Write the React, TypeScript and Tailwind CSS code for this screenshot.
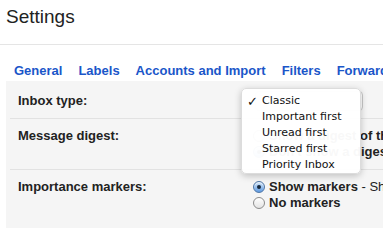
import React from "react";

const TABS = ["General", "Labels", "Accounts and Import", "Filters", "Forwarding and POP/IMAP"];
const INBOX_TYPES = ["Classic", "Important first", "Unread first", "Starred first", "Priority Inbox"];

function Radio({ checked }: { checked?: boolean }) {
  return checked ? (
    <span className="w-[12px] h-[12px] rounded-full border border-[#4f76a6] bg-gradient-to-b from-[#d6e8fa] to-[#5e9ae0] flex items-center justify-center shrink-0 shadow-[inset_0_1px_1px_rgba(255,255,255,0.7)]">
      <span className="w-[4px] h-[4px] rounded-full bg-[#17283b]" />
    </span>
  ) : (
    <span className="w-[12px] h-[12px] rounded-full border border-[#8c8c8c] bg-gradient-to-b from-[#ffffff] to-[#e4e4e4] shrink-0" />
  );
}

export default function App() {
  return (
    <div className="w-[383px] h-[228px] overflow-hidden bg-white font-['Liberation_Sans',Arial,sans-serif] text-[13px] text-[#222] flex flex-col">
      {/* header */}
      <div className="h-[45px] border-b border-[#e5e5e5] pl-[6px] pt-[6px] shrink-0">
        <h1 className="text-[19px] leading-[22px] text-[#222]">Settings</h1>
      </div>

      {/* tabs */}
      <div className="h-[36px] shrink-0 flex items-end pb-[2px] pl-[14px] gap-4 whitespace-nowrap">
        {TABS.map((t) => (
          <span key={t} className="font-bold text-[#1a56c9] leading-[16px]">{t}</span>
        ))}
      </div>

      {/* settings panel */}
      <div className="relative flex-1 ml-[6px] bg-[#f5f5f5] pl-[4px]">
        {/* inbox type */}
        <div className="h-[38px] border-b border-[#e2e2e2] flex pl-[8px] pt-[12px]">
          <div className="w-[235px] font-bold leading-[16px] shrink-0">Inbox type:</div>
          <div className="w-[108px] h-[20px] -mt-[2px] ml-[2px] rounded-[4px] border border-[#c8c8c8] bg-white shrink-0" />
        </div>

        {/* message digest */}
        <div className="h-[51px] border-b border-[#e2e2e2] flex pl-[8px] pt-[9px]">
          <div className="w-[235px] font-bold leading-[16px] shrink-0">Message digest:</div>
          <div className="flex flex-col whitespace-nowrap">
            <div className="flex items-center gap-[4px] h-[16px]">
              <Radio />
              <span className="font-bold">Show a digest of the messages</span>
            </div>
            <div className="flex items-center gap-[4px] h-[16px]">
              <Radio checked />
              <span className="font-bold">Don't show a digest</span>
            </div>
          </div>
        </div>

        {/* importance markers */}
        <div className="flex pl-[8px] pt-[9px]">
          <div className="w-[235px] font-bold leading-[16px] shrink-0">Importance markers:</div>
          <div className="flex flex-col whitespace-nowrap">
            <div className="flex items-center gap-[4px] h-[16px]">
              <Radio checked />
              <span>
                <span className="font-bold">Show markers</span> - Show a marker
              </span>
            </div>
            <div className="flex items-center gap-[4px] h-[16px]">
              <Radio />
              <span className="font-bold">No markers</span>
            </div>
          </div>
        </div>

        {/* open select menu */}
        <div className="absolute left-[235px] top-[7px] w-[120px] h-[86px] rounded-[5px] bg-white/[0.97] border border-[#dcdcdc] shadow-[0_2px_7px_rgba(0,0,0,0.22)] pt-[4px] font-['DejaVu_Sans',sans-serif] text-[11px] text-[#111]">
          {INBOX_TYPES.map((o, i) => (
            <div key={o} className="h-[16px] flex items-center">
              <span className="w-[20px] pl-[5px] text-[13px] font-bold leading-none">{i === 0 ? "✓" : ""}</span>
              <span>{o}</span>
            </div>
          ))}
        </div>
      </div>
    </div>
  );
}
